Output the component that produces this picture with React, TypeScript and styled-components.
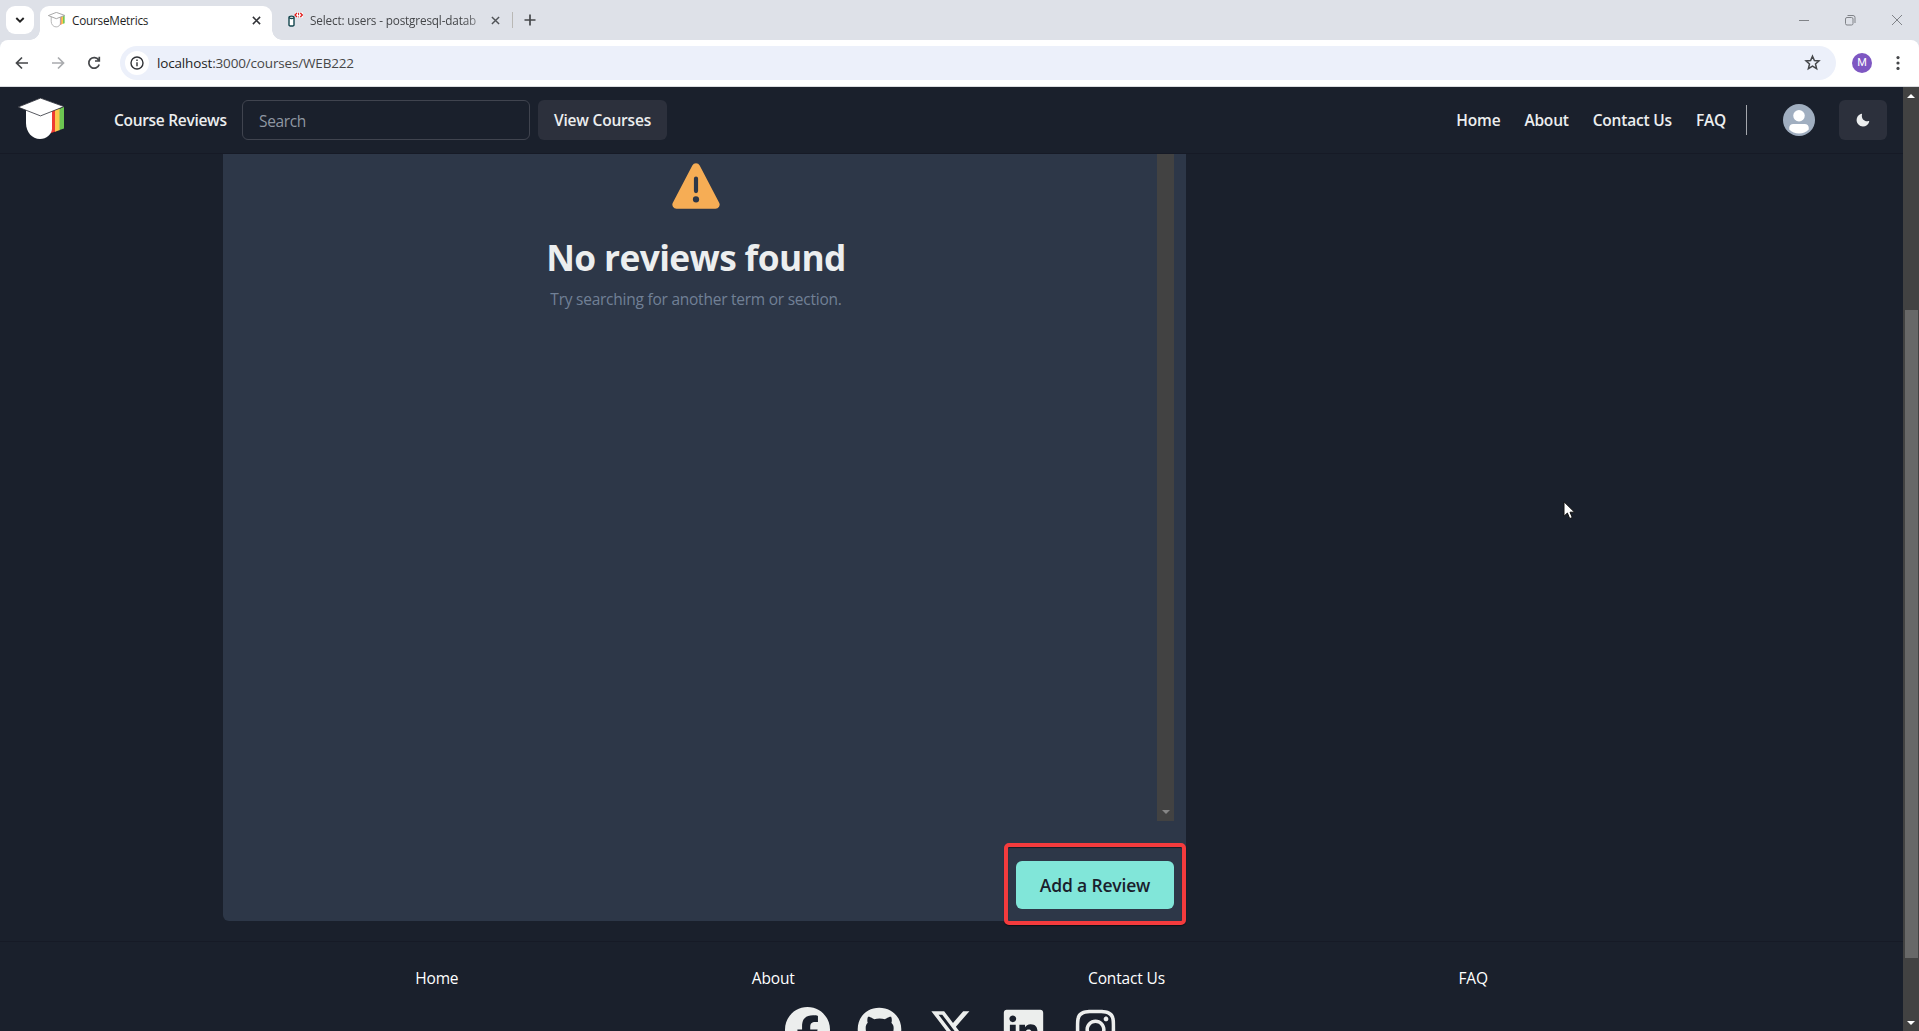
import React from "react";
import styled, { createGlobalStyle } from "styled-components";
import { FaFacebook, FaGithub, FaXTwitter, FaLinkedin, FaInstagram } from "react-icons/fa6";

const GlobalStyle = createGlobalStyle`
  *, *::before, *::after { box-sizing: border-box; }
  html, body, #root { margin: 0; height: 100%; overflow: hidden; }
  body {
    background: #1a202c;
    font-family: "Segoe UI", "Open Sans", "Noto Sans", sans-serif;
    color: #eceeef;
  }
  button { font-family: inherit; border: 0; padding: 0; margin: 0; }
  svg { display: block; flex: none; }
`;

const Window = styled.div`
  display: flex;
  flex-direction: column;
  width: 1919px;
  height: 1031px;
  overflow: hidden;
`;

/* ---------- browser chrome ---------- */

const TabStrip = styled.div`
  display: flex;
  align-items: flex-start;
  height: 40px;
  flex: none;
  background: #dee1e8;
  padding-left: 6px;
`;

const TabSearch = styled.button`
  display: flex;
  align-items: center;
  justify-content: center;
  width: 28px;
  height: 28px;
  margin-top: 6px;
  border-radius: 9px;
  background: #fff;
`;

const Tab = styled.div<{ $active?: boolean; $width: number }>`
  position: relative;
  display: flex;
  align-items: center;
  width: ${(p) => p.$width}px;
  height: ${(p) => (p.$active ? 34 : 28)}px;
  margin: 6px 0 0 ${(p) => (p.$active ? 6 : 8)}px;
  padding: 0 ${(p) => (p.$active ? 11 : 6)}px ${(p) => (p.$active ? 6 : 0)}px 8px;
  background: ${(p) => (p.$active ? "#fff" : "transparent")};
  border-radius: 9px 9px 0 0;
  color: ${(p) => (p.$active ? "#1f1f1f" : "#45474a")};
  ${(p) =>
    p.$active &&
    `
    &::before, &::after {
      content: "";
      position: absolute;
      bottom: 0;
      width: 10px;
      height: 10px;
    }
    &::before { left: -10px; background: radial-gradient(circle at 0 0, transparent 9.5px, #fff 10px); }
    &::after { right: -10px; background: radial-gradient(circle at 100% 0, transparent 9.5px, #fff 10px); }
  `}
`;

const TabTitle = styled.span<{ $fade?: boolean }>`
  flex: 1;
  margin-left: 7px;
  white-space: nowrap;
  font-size: 11.75px;
  line-height: 16px;
  letter-spacing: ${(p) => (p.$fade ? -0.16 : -0.22)}px;
  ${(p) => p.$fade && "mask-image: linear-gradient(to right, #000 84%, rgba(0, 0, 0, 0.15) 100%);"}
`;

const TabDivider = styled.div`
  width: 1px;
  height: 16px;
  margin: 12px 11px 0 6px;
  background: #b9b8b5;
`;

const NewTab = styled.div`
  margin-top: 13px;
`;

const WindowButtons = styled.div`
  display: flex;
  align-items: center;
  gap: 28px;
  height: 40px;
  margin-left: auto;
  padding-right: 15px;
`;

const Toolbar = styled.div`
  display: flex;
  align-items: center;
  height: 47px;
  flex: none;
  padding: 0 13px 1px 14px;
  background: #fff;
  border-bottom: 1px solid #dadce0;
  border-radius: 8px 8px 0 0;
`;

const ToolbarWrap = styled.div`
  flex: none;
  background: #dee1e8;
`;

const NavIcons = styled.div`
  display: flex;
  gap: 20px;
`;

const Omnibox = styled.div`
  display: flex;
  align-items: center;
  flex: 1;
  height: 34px;
  margin-left: 18px;
  padding: 0 15px 0 5px;
  border-radius: 17px;
  background: #ecf0fa;
`;

const SiteInfo = styled.div`
  display: flex;
  align-items: center;
  justify-content: center;
  width: 24px;
  height: 24px;
  border-radius: 50%;
  background: #fff;
`;

const Url = styled.span`
  flex: 1;
  margin-left: 8px;
  font-size: 13.5px;
  letter-spacing: -0.16px;
  color: #474747;
  b { font-weight: 400; color: #1f1f1f; }
`;

const Profile = styled.div`
  display: flex;
  align-items: center;
  justify-content: center;
  width: 20px;
  height: 20px;
  margin: 0 18px 0 16px;
  border-radius: 50%;
  background: #7e57c2;
  color: #fff;
  font: 11px Roboto, sans-serif;
`;

/* ---------- page ---------- */

const Viewport = styled.div`
  display: flex;
  flex: 1;
  min-height: 0;
`;

const Page = styled.div`
  display: flex;
  flex-direction: column;
  flex: 1;
  min-width: 0;
  overflow: hidden;
`;

const Header = styled.header`
  display: flex;
  align-items: center;
  height: 67px;
  flex: none;
  padding: 0 16px 0 17px;
  border-bottom: 1px solid #161a26;
`;

const Brand = styled.span`
  width: 113px;
  margin: 0 15px 0 49px;
  white-space: nowrap;
  font-size: 15.5px;
  font-weight: 600;
  letter-spacing: -0.3px;
`;

const SearchInput = styled.div`
  display: flex;
  align-items: center;
  width: 288px;
  height: 40px;
  padding: 1px 16px 0;
  border: 1px solid #40444f;
  border-radius: 6px;
  color: #8f97a2;
  font-size: 15.5px;
  letter-spacing: -0.35px;
`;

const DarkButton = styled.button<{ $width: number }>`
  display: flex;
  align-items: center;
  justify-content: center;
  width: ${(p) => p.$width}px;
  height: 40px;
  border-radius: 6px;
  background: #2c303c;
  color: #eceeef;
  font-size: 15.5px;
  font-weight: 600;
  letter-spacing: -0.2px;
`;

const ViewCourses = styled(DarkButton)`
  margin-left: 8px;
`;

const NavLinks = styled.nav`
  display: flex;
  gap: 24px;
  margin-left: auto;
  font-size: 15.5px;
  font-weight: 600;
  letter-spacing: -0.2px;
`;

const NavDivider = styled.div`
  width: 1px;
  height: 30px;
  margin: 0 36px 0 20px;
  background: #a4a7ad;
`;

const Avatar = styled.div`
  width: 32px;
  height: 32px;
  margin-right: 24px;
  border-radius: 50%;
  overflow: hidden;
  background: #a0aec0;
`;

const Main = styled.main`
  display: flex;
  flex: none;
  padding: 0 0 20px 223px;
`;

const Panel = styled.section`
  display: flex;
  flex-direction: column;
  justify-content: space-between;
  width: 963px;
  height: 767px;
  padding: 0 12px 12px;
  background: #2d3748;
  border-radius: 0 0 6px 6px;
`;

const ReviewList = styled.div`
  display: flex;
  height: 667px;
`;

const EmptyState = styled.div`
  display: flex;
  flex-direction: column;
  align-items: center;
  flex: 1;
  padding-top: 7px;
`;

const EmptyTitle = styled.h2`
  margin: 24px 0 0;
  font-size: 35.3px;
  line-height: 44px;
  font-weight: 700;
  letter-spacing: -0.62px;
`;

const EmptyHint = styled.p`
  margin: 8px 0 0;
  font-size: 15.5px;
  line-height: 24px;
  letter-spacing: -0.24px;
  color: #718096;
`;

const ListScrollbar = styled.div`
  display: flex;
  align-items: flex-end;
  justify-content: center;
  width: 17px;
  padding-bottom: 7px;
  background: #424242;
`;

const Actions = styled.div`
  display: flex;
  justify-content: flex-end;
`;

const ButtonSlot = styled.div`
  position: relative;
`;

const AddButton = styled.button`
  display: block;
  width: 158px;
  height: 48px;
  border-radius: 6px;
  background: #81e6d9;
  color: #1a202c;
  font-size: 17.5px;
  font-weight: 600;
  letter-spacing: -0.17px;
`;

const Highlight = styled.div`
  position: absolute;
  inset: -18px -12px -16px -12px;
  border: 4px solid #f43b3d;
  border-radius: 5px;
  box-shadow: 0 1px 1px rgba(0, 0, 0, 0.5), inset 0 1px 1px rgba(0, 0, 0, 0.5);
`;

const Footer = styled.footer`
  display: flex;
  flex-direction: column;
  align-items: center;
  flex: 1;
  padding-top: 24px;
  border-top: 1px solid #161a26;
`;

const FooterLinks = styled.nav`
  display: flex;
  justify-content: space-around;
  width: 1366px;
  font-size: 15.5px;
  line-height: 24px;
  letter-spacing: -0.15px;
  color: #fff;
`;

const Socials = styled.div`
  display: flex;
  gap: 27px;
  margin-top: 17px;
  color: #eceeed;
`;

const PageScrollbar = styled.div`
  display: flex;
  flex-direction: column;
  align-items: center;
  width: 16px;
  padding: 7px 0 6px;
  background: #424242;
`;

const Thumb = styled.div`
  width: 13px;
  height: 648px;
  margin: 212px 0 auto;
  background: #686868;
`;

const Pointer = styled.svg`
  position: absolute;
  left: 1563px;
  top: 501px;
`;

const CapLogo = ({ size, outline }: { size: number; outline?: boolean }) => (
  <svg width={size} height={size * 0.9} viewBox={outline ? "0 0 48 43" : "0 1 48 43"}>
    <path d="M34 14 L38.6 12.5 V34.5 L34 36z" fill="#ee3b32" />
    <path d="M38 12.6 L43 11.5 V33 L38 34.6z" fill="#fbc84c" />
    <path d="M42.5 12 L47 9.5 V31.5 L42.5 32.8z" fill="#6cc551" />
    <path
      d="M9 13 V26 C9 35 15 42 23 42 C29.5 42 34.5 37.5 35 32 V14z"
      fill="#fff"
      stroke={outline ? "#aaa" : "none"}
      strokeWidth="2.4"
    />
    <path
      d="M1 10 L23.5 1 L47 9.5 L23.5 18.8z"
      fill="#fff"
      stroke={outline ? "#999" : "#2d3039"}
      strokeWidth={outline ? 2.4 : 0.8}
    />
  </svg>
);

const Cross = ({ size = 9, color = "#303236", width = 1.7 }) => (
  <svg width={size} height={size} viewBox="0 0 10 10" stroke={color} strokeWidth={width} fill="none">
    <path d="M1 1 9 9M9 1 1 9" />
  </svg>
);

const Arrow = ({ down, color = "#fff" }: { down?: boolean; color?: string }) => (
  <svg width="8" height="4" viewBox="0 0 8 4" fill={color}>
    <path d={down ? "M0 0H8L4 4z" : "M0 4H8L4 0z"} />
  </svg>
);

const SOCIAL_ICONS = [FaFacebook, FaGithub, FaXTwitter, FaLinkedin, FaInstagram];
const LINKS = ["Home", "About", "Contact Us", "FAQ"];

export default function App() {
  return (
    <Window>
      <GlobalStyle />
      <TabStrip>
        <TabSearch>
          <svg width="10" height="10" viewBox="0 0 10 10" fill="none" stroke="#222" strokeWidth="1.9">
            <path d="M1.3 3 5 6.7 8.7 3" />
          </svg>
        </TabSearch>
        <Tab $active $width={232}>
          <CapLogo size={17} outline />
          <TabTitle>CourseMetrics</TabTitle>
          <Cross />
        </Tab>
        <Tab $width={226}>
          <svg width="15" height="16" viewBox="0 0 15 16" fill="none">
            <path d="M1 5.5V13c0 1.4 5 1.4 5 0V5.5" fill="#fff" stroke="#15474f" strokeWidth="1.4" />
            <ellipse cx="3.5" cy="5.3" rx="2.5" ry="1.2" fill="#fff" stroke="#15474f" strokeWidth="1.3" />
            <path d="M7 .5h8v5H8.5z" fill="#fff" />
            <path d="M9 1 7 3l2 2M12.3 1l2 2-2 2" stroke="#e01818" strokeWidth="1.2" />
            <path d="M10.6.8v2.4M10.6 4.4v1" stroke="#e01818" />
          </svg>
          <TabTitle $fade>Select: users - postgresql-datab</TabTitle>
          <Cross color="#505357" width={1.6} />
        </Tab>
        <TabDivider />
        <NewTab>
          <svg width="12" height="14" viewBox="0 0 12 14" stroke="#45474a" strokeWidth="1.7">
            <path d="M6 1.5v11M.5 7h11" />
          </svg>
        </NewTab>
        <WindowButtons>
          <svg width="24" height="12" viewBox="0 0 24 12" stroke="#808388">
            <path d="M7 6.5h10" />
          </svg>
          <svg width="14" height="12" viewBox="0 0 14 12" fill="none" stroke="#808388">
            <rect x="1.5" y="3.5" width="7.5" height="7.5" rx="1.5" />
            <path d="M3.5 1.5h5.5a2 2 0 0 1 2 2V9" />
          </svg>
          <svg width="18" height="12" viewBox="-4 0 18 12" stroke="#808388">
            <path d="M2 1 12 11M12 1 2 11" />
          </svg>
        </WindowButtons>
      </TabStrip>
      <ToolbarWrap>
        <Toolbar>
          <NavIcons>
            <svg width="16" height="16" viewBox="0 0 16 16" fill="none" stroke="#45474a" strokeWidth="1.7">
              <path d="M14 8H3M8 2.5 2.5 8 8 13.5" />
            </svg>
            <svg width="16" height="16" viewBox="0 0 16 16" fill="none" stroke="#a9abae" strokeWidth="1.7">
              <path d="M2 8h11M8 2.5 13.5 8 8 13.5" />
            </svg>
            <svg width="16" height="16" viewBox="0 0 16 16" fill="none" stroke="#45474a" strokeWidth="1.7">
              <path d="M12.6 5A5.3 5.3 0 1 0 13.2 9.5M13.3 1.8V6H9" />
            </svg>
          </NavIcons>
          <Omnibox>
            <SiteInfo>
              <svg width="14" height="14" viewBox="0 0 14 14" fill="none" stroke="#303236" strokeWidth="1.4">
                <circle cx="7" cy="7" r="6" />
                <path d="M7 6.2v4M7 3.6v1.5" />
              </svg>
            </SiteInfo>
            <Url>
              <b>localhost</b>:3000/courses/WEB222
            </Url>
            <svg width="17" height="17" viewBox="0 0 17 17" fill="none" stroke="#45474a" strokeWidth="1.5">
              <path d="M8.5 2.2 10.4 6.5 15 6.9 11.5 10 12.6 14.6 8.5 12.1 4.4 14.6 5.5 10 2 6.9 6.6 6.5z" />
            </svg>
          </Omnibox>
          <Profile>M</Profile>
          <svg width="16" height="16" viewBox="0 0 16 16" fill="#45474a">
            <circle cx="8" cy="2.6" r="1.6" />
            <circle cx="8" cy="8" r="1.6" />
            <circle cx="8" cy="13.4" r="1.6" />
          </svg>
        </Toolbar>
      </ToolbarWrap>

      <Viewport>
        <Page>
          <Header>
            <CapLogo size={48} />
            <Brand>Course Reviews</Brand>
            <SearchInput>Search</SearchInput>
            <ViewCourses $width={129}>View Courses</ViewCourses>
            <NavLinks>
              {LINKS.map((l) => (
                <span key={l}>{l}</span>
              ))}
            </NavLinks>
            <NavDivider />
            <Avatar>
              <svg width="32" height="32" viewBox="0 0 128 128" fill="#fff">
                <path d="M103,102.1388 C93.094,111.92 79.3504,118 64.1638,118 C48.8056,118 34.9294,111.768 25,101.7892 L25,95.2 C25,86.8096 31.981,80 40.6,80 L87.4,80 C96.019,80 103,86.8096 103,95.2 L103,102.1388 Z" />
                <circle cx="64" cy="47" r="23" />
              </svg>
            </Avatar>
            <DarkButton $width={48}>
              <svg width="14" height="14" viewBox="0 0 24 24" fill="#eceeef">
                <path d="M21.4,13.7C20.6,13.9,19.8,14,19,14c-5,0-9-4-9-9c0-0.8,0.1-1.6,0.3-2.4c0.1-0.3,0-0.7-0.3-1c-0.3-0.3-0.6-0.4-1-0.3C4.3,2.7,1,7.1,1,12c0,6.1,4.9,11,11,11c4.9,0,9.3-3.3,10.6-8.1c0.1-0.3,0-0.7-0.3-1C22.1,13.7,21.7,13.6,21.4,13.7z" />
              </svg>
            </DarkButton>
          </Header>

          <Main>
            <Panel>
              <ReviewList>
                <EmptyState>
                  <svg width="50" height="50" viewBox="0 0 24 24" fill="#f6ad55">
                    <path d="M23.119,20,13.772,2.15h0a2,2,0,0,0-3.543,0L.881,20a2,2,0,0,0,1.772,2.928H21.347A2,2,0,0,0,23.119,20ZM11,8.423a1,1,0,0,1,2,0v6a1,1,0,1,1-2,0Zm1.05,11.51h-.028a1.528,1.528,0,0,1-1.522-1.47,1.476,1.476,0,0,1,1.448-1.53h.028A1.527,1.527,0,0,1,13.5,18.4,1.475,1.475,0,0,1,12.05,19.933Z" />
                  </svg>
                  <EmptyTitle>No reviews found</EmptyTitle>
                  <EmptyHint>Try searching for another term or section.</EmptyHint>
                </EmptyState>
                <ListScrollbar>
                  <Arrow down color="#868686" />
                </ListScrollbar>
              </ReviewList>
              <Actions>
                <ButtonSlot>
                  <AddButton>Add a Review</AddButton>
                  <Highlight />
                </ButtonSlot>
              </Actions>
            </Panel>
          </Main>

          <Footer>
            <FooterLinks>
              {LINKS.map((l) => (
                <span key={l}>{l}</span>
              ))}
            </FooterLinks>
            <Socials>
              {SOCIAL_ICONS.map((Icon, i) => (
                <Icon key={i} size={45} />
              ))}
            </Socials>
          </Footer>
        </Page>
        <PageScrollbar>
          <Arrow />
          <Thumb />
          <Arrow down />
        </PageScrollbar>
      </Viewport>

      <Pointer width="14" height="20" viewBox="0 0 14 20">
        <path
          d="M1 .8V15.2L4.4 12 6.7 17.6 9.3 16.5 7 11.2H11.6z"
          fill="#fff"
          stroke="#111"
          strokeWidth="1"
        />
      </Pointer>
    </Window>
  );
}
